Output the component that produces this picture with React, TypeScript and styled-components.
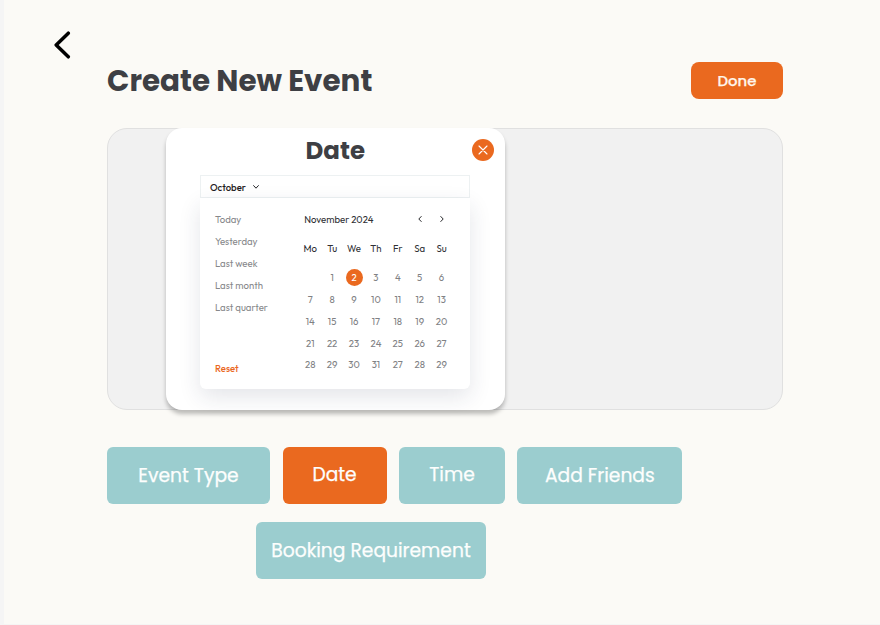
import React from "react";
import styled, { createGlobalStyle } from "styled-components";

const GlobalStyle = createGlobalStyle`
  *, *::before, *::after { box-sizing: border-box; }
  html, body { margin: 0; padding: 0; background: #fbfaf6; }
  button { font: inherit; color: inherit; border: 0; padding: 0; margin: 0; background: none; cursor: pointer; }
  h1, h2 { margin: 0; }
`;

const display = `"Poppins", "Inter", sans-serif`;
const body = `"Outfit", "Lato", sans-serif`;
const orange = "#ea691f";

const Page = styled.main`
  width: 880px;
  height: 625px;
  overflow: hidden;
  background: #fbfaf6;
  border-left: 4px solid #f5f5f5;
  border-bottom: 1px solid #f5f5f4;
  padding: 31px 0 0 50px;
  font-family: ${display};
`;

const BackButton = styled.button`
  display: block;
  width: 17px;
  height: 28px;
  svg { display: block; }
`;

const Content = styled.div`
  width: 676px;
  margin-left: 53px;
`;

const Header = styled.header`
  display: flex;
  align-items: center;
  justify-content: space-between;
  height: 37px;
  margin-top: 3px;
`;

const Title = styled.h1`
  font-size: 29.4px;
  line-height: 36px;
  font-weight: 700;
  color: #3e3f44;
  white-space: nowrap;
`;

const DoneButton = styled.button`
  width: 92px;
  height: 37px;
  border-radius: 8px;
  background: ${orange};
  color: #fff6ec;
  font-size: 14.9px;
  font-weight: 500;
  -webkit-text-stroke: 0.25px currentColor;
`;

const Stage = styled.section`
  height: 282px;
  margin-top: 29px;
  padding-left: 57.5px;
  border: 1px solid #e0e0e0;
  border-radius: 20px;
  background: #f1f1f1;
`;

const Modal = styled.div`
  width: 339.5px;
  height: 282px;
  margin-top: -1px;
  padding: 0 34.5px;
  border-radius: 16px;
  background: #fff;
  box-shadow: 0 4px 4px rgba(0, 0, 0, 0.25);
`;

const ModalHeader = styled.div`
  display: grid;
  grid-template-columns: 1fr auto 1fr;
  align-items: center;
  height: 47px;
  margin-right: -23.5px;
  margin-left: -23.5px;
`;

const ModalTitle = styled.h2`
  grid-column: 2;
  margin-top: -2px;
  font-size: 24.5px;
  line-height: 46px;
  font-weight: 700;
  color: #3e3f44;
`;

const CloseButton = styled.button`
  justify-self: end;
  display: grid;
  place-items: center;
  width: 22px;
  height: 22px;
  margin-top: -2.5px;
  border-radius: 50%;
  background: ${orange};
`;

const MonthSelect = styled.button`
  display: flex;
  align-items: center;
  gap: 7px;
  width: 270px;
  height: 23px;
  padding: 0 0 0 9px;
  border: 1px solid #edf1f2;
  color: #1f2022;
  font: 500 9.6px/20px ${body};
`;

const Picker = styled.div`
  display: grid;
  grid-template-columns: 84.3px 154px;
  width: 270px;
  height: 191px;
  padding: 9.6px 0 0 15px;
  border-radius: 0 0 6px 6px;
  background: #fff;
  box-shadow: 0 8px 22px rgba(35, 45, 75, 0.12);
  font-family: ${body};
  font-size: 9.6px;
  font-weight: 400;
  color: #808184;
`;

const Presets = styled.div`
  display: flex;
  flex-direction: column;
  align-items: flex-start;
  height: 171.4px;
`;

const Preset = styled.button`
  height: 22px;
  line-height: 22px;
  font-weight: 400;
  color: #87888b;
  white-space: nowrap;
`;

const Reset = styled.button`
  height: 22px;
  margin-top: auto;
  color: ${orange};
  font-weight: 500;
`;

const MonthBar = styled.div`
  display: flex;
  align-items: center;
  height: 22px;
  padding-left: 5px;
  color: #303135;
`;

const MonthName = styled.span`
  flex: 1;
  line-height: 22px;
  white-space: nowrap;
`;

const Step = styled.button`
  display: grid;
  place-items: center;
  width: 22px;
  height: 22px;
`;

const Week = styled.div<{ $head?: boolean }>`
  display: grid;
  grid-template-columns: repeat(7, 21.9px);
  height: ${(p) => (p.$head ? "36.8px" : "21.9px")};
  align-items: center;
  justify-items: center;
  color: ${(p) => (p.$head ? "#303135" : "inherit")};
`;

const Day = styled.span<{ $on?: boolean }>`
  width: 17px;
  height: 17px;
  border-radius: 50%;
  line-height: 17px;
  text-align: center;
  white-space: nowrap;
  background: ${(p) => (p.$on ? orange : "transparent")};
  color: ${(p) => (p.$on ? "#fff" : "inherit")};
`;

const Steps = styled.nav`
  display: flex;
  flex-wrap: wrap;
  gap: 18.5px 12.6px;
  width: 576px;
  margin-top: 36.5px;
`;

const StepRow = styled.div<{ $indent?: number }>`
  display: flex;
  gap: 12.6px;
  padding-left: ${(p) => p.$indent ?? 0}px;
`;

const StepButton = styled.button<{ $w: number; $on?: boolean; $lift?: number }>`
  width: ${(p) => p.$w}px;
  height: 57px;
  padding-bottom: ${(p) => p.$lift ?? 0}px;
  border-radius: 6px;
  background: ${(p) => (p.$on ? orange : "#9bcdcf")};
  color: #fdfefd;
  font-size: 18.7px;
  font-weight: 400;
  -webkit-text-stroke: 0.25px currentColor;
  white-space: nowrap;
`;

const presets = ["Today", "Yesterday", "Last week", "Last month", "Last quarter"];
const weekdays = ["Mo", "Tu", "We", "Th", "Fr", "Sa", "Su"];
const weeks = [
  ["", "1", "2", "3", "4", "5", "6"],
  ["7", "8", "9", "10", "11", "12", "13"],
  ["14", "15", "16", "17", "18", "19", "20"],
  ["21", "22", "23", "24", "25", "26", "27"],
  ["28", "29", "30", "31", "27", "28", "29"],
];

function Stroke({ w, h, d, color, width }: { w: number; h: number; d: string; color: string; width: number }) {
  return (
    <svg width={w} height={h} viewBox={`0 0 ${w} ${h}`} fill="none" stroke={color} strokeWidth={width} strokeLinecap="round" strokeLinejoin="round">
      <path d={d} />
    </svg>
  );
}

export default function App() {
  return (
    <>
      <GlobalStyle />
      <Page>
        <BackButton aria-label="Back">
          <Stroke w={17} h={28} d="M14.3 2.2 2.2 14 14.3 25.8" color="#000" width={3.5} />
        </BackButton>
        <Content>
          <Header>
            <Title>Create New Event</Title>
            <DoneButton>Done</DoneButton>
          </Header>
          <Stage>
            <Modal>
              <ModalHeader>
                <ModalTitle>Date</ModalTitle>
                <CloseButton aria-label="Close">
                  <Stroke w={10} h={10} d="M1 1 9 9M9 1 1 9" color="#fff" width={1.1} />
                </CloseButton>
              </ModalHeader>
              <MonthSelect>
                October
                <Stroke w={6} h={4} d="M.6.6 3 3.2 5.4.6" color="#26272a" width={1} />
              </MonthSelect>
              <Picker>
                <Presets>
                  {presets.map((p) => (
                    <Preset key={p}>{p}</Preset>
                  ))}
                  <Reset>Reset</Reset>
                </Presets>
                <div>
                  <MonthBar>
                    <MonthName>November 2024</MonthName>
                    <Step aria-label="Previous month">
                      <Stroke w={4} h={6} d="M3.2.5.8 3 3.2 5.5" color="#26272a" width={1} />
                    </Step>
                    <Step aria-label="Next month">
                      <Stroke w={4} h={6} d="M.8.5 3.2 3 .8 5.5" color="#26272a" width={1} />
                    </Step>
                  </MonthBar>
                  <Week $head>
                    {weekdays.map((d) => (
                      <span key={d}>{d}</span>
                    ))}
                  </Week>
                  {weeks.map((week, i) => (
                    <Week key={i}>
                      {week.map((d, j) => (
                        <Day key={j} $on={d === "2"}>{d}</Day>
                      ))}
                    </Week>
                  ))}
                </div>
              </Picker>
            </Modal>
          </Stage>
          <Steps>
            <StepRow>
              <StepButton $w={163}>Event Type</StepButton>
              <StepButton $w={104} $on $lift={2}>Date</StepButton>
              <StepButton $w={105.6} $lift={2}>Time</StepButton>
              <StepButton $w={165}>Add Friends</StepButton>
            </StepRow>
            <StepRow $indent={149}>
              <StepButton $w={230}>Booking Requirement</StepButton>
            </StepRow>
          </Steps>
        </Content>
      </Page>
    </>
  );
}
